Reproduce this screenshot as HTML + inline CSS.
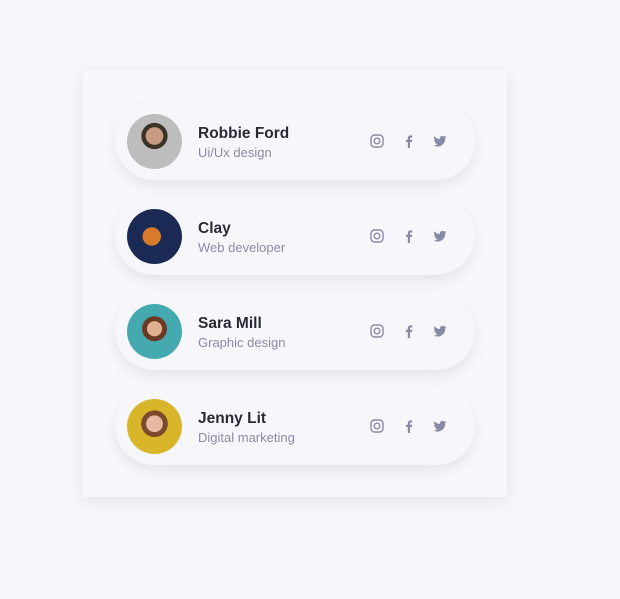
<!DOCTYPE html>
<html><head><style>
body{margin:0;width:620px;height:599px;background:#f7f7fb;font-family:"Liberation Sans",sans-serif;position:relative;overflow:hidden}
.box{position:absolute;left:83px;top:70px;width:424px;height:427px;background:#f8f8fc;box-shadow:0 4px 14px rgba(0,0,0,.08)}
.pill{position:absolute;left:32px;width:360px;height:78px;border-radius:39px;background:#f7f7fb;box-shadow:0 6px 14px rgba(0,0,0,.08)}
.av{position:absolute;left:12px;top:12px;width:55px;height:55px;border-radius:50%}
.n{position:absolute;left:83px;top:23px;font-size:15.5px;font-weight:bold;color:#2a2a36}
.s{position:absolute;left:83px;top:43px;font-size:13px;color:#8a8aa8}
.ic{position:absolute;top:32px;width:14px;height:14px}
</style></head><body>
<div class="box">
<div class="pill" style="top:32px"><div class="av" style="background:radial-gradient(circle at 50% 40%,#c69b80 0 20%,#3a3328 21% 30%,#bdbdbd 31%)"></div><div class="n">Robbie Ford</div><div class="s">Ui/Ux design</div>
<svg class="ic" style="left:255px" viewBox="0 0 14 14" fill="none" stroke="#8a8aa8" stroke-width="1.4"><rect x="1" y="1" width="12" height="12" rx="3.5"/><circle cx="7" cy="7" r="2.8"/></svg>
<svg class="ic" style="left:287px" viewBox="0 0 14 14"><path d="M8 14V8h2l.3-2.2H8V4.5c0-.6.2-1 1-1h1.3V1.5C10 1.5 9.4 1.4 8.6 1.4 6.9 1.4 5.8 2.4 5.8 4.3v1.5H4V8h1.8v6z" fill="#8a8aa8"/></svg>
<svg class="ic" style="left:318px" viewBox="0 0 14 14"><path d="M13.5 3.1c-.5.2-1 .4-1.5.4.6-.3 1-.9 1.2-1.5-.5.3-1.1.5-1.7.7a2.7 2.7 0 0 0-4.6 2.4C4.7 5 2.7 3.9 1.4 2.3c-.8 1.3-.3 2.8.8 3.6-.4 0-.9-.1-1.2-.3 0 1.3.9 2.4 2.2 2.7-.4.1-.8.1-1.2 0 .3 1.1 1.4 1.9 2.5 1.9A5.4 5.4 0 0 1 .5 11.3 7.6 7.6 0 0 0 12.2 4.5v-.3c.5-.4 1-.8 1.3-1.1z" fill="#8a8aa8"/></svg>
</div>
<div class="pill" style="top:127px"><div class="av" style="background:radial-gradient(circle at 45% 50%,#d97a2a 0 22%,#1a2a55 23%)"></div><div class="n">Clay</div><div class="s">Web developer</div>
<svg class="ic" style="left:255px" viewBox="0 0 14 14" fill="none" stroke="#8a8aa8" stroke-width="1.4"><rect x="1" y="1" width="12" height="12" rx="3.5"/><circle cx="7" cy="7" r="2.8"/></svg>
<svg class="ic" style="left:287px" viewBox="0 0 14 14"><path d="M8 14V8h2l.3-2.2H8V4.5c0-.6.2-1 1-1h1.3V1.5C10 1.5 9.4 1.4 8.6 1.4 6.9 1.4 5.8 2.4 5.8 4.3v1.5H4V8h1.8v6z" fill="#8a8aa8"/></svg>
<svg class="ic" style="left:318px" viewBox="0 0 14 14"><path d="M13.5 3.1c-.5.2-1 .4-1.5.4.6-.3 1-.9 1.2-1.5-.5.3-1.1.5-1.7.7a2.7 2.7 0 0 0-4.6 2.4C4.7 5 2.7 3.9 1.4 2.3c-.8 1.3-.3 2.8.8 3.6-.4 0-.9-.1-1.2-.3 0 1.3.9 2.4 2.2 2.7-.4.1-.8.1-1.2 0 .3 1.1 1.4 1.9 2.5 1.9A5.4 5.4 0 0 1 .5 11.3 7.6 7.6 0 0 0 12.2 4.5v-.3c.5-.4 1-.8 1.3-1.1z" fill="#8a8aa8"/></svg>
</div>
<div class="pill" style="top:222px"><div class="av" style="background:radial-gradient(circle at 50% 45%,#e0b090 0 18%,#6a3a25 19% 30%,#45a9b0 31%)"></div><div class="n">Sara Mill</div><div class="s">Graphic design</div>
<svg class="ic" style="left:255px" viewBox="0 0 14 14" fill="none" stroke="#8a8aa8" stroke-width="1.4"><rect x="1" y="1" width="12" height="12" rx="3.5"/><circle cx="7" cy="7" r="2.8"/></svg>
<svg class="ic" style="left:287px" viewBox="0 0 14 14"><path d="M8 14V8h2l.3-2.2H8V4.5c0-.6.2-1 1-1h1.3V1.5C10 1.5 9.4 1.4 8.6 1.4 6.9 1.4 5.8 2.4 5.8 4.3v1.5H4V8h1.8v6z" fill="#8a8aa8"/></svg>
<svg class="ic" style="left:318px" viewBox="0 0 14 14"><path d="M13.5 3.1c-.5.2-1 .4-1.5.4.6-.3 1-.9 1.2-1.5-.5.3-1.1.5-1.7.7a2.7 2.7 0 0 0-4.6 2.4C4.7 5 2.7 3.9 1.4 2.3c-.8 1.3-.3 2.8.8 3.6-.4 0-.9-.1-1.2-.3 0 1.3.9 2.4 2.2 2.7-.4.1-.8.1-1.2 0 .3 1.1 1.4 1.9 2.5 1.9A5.4 5.4 0 0 1 .5 11.3 7.6 7.6 0 0 0 12.2 4.5v-.3c.5-.4 1-.8 1.3-1.1z" fill="#8a8aa8"/></svg>
</div>
<div class="pill" style="top:317px"><div class="av" style="background:radial-gradient(circle at 50% 45%,#e8b8a0 0 20%,#7a4a2a 21% 32%,#d9b52a 33%)"></div><div class="n">Jenny Lit</div><div class="s">Digital marketing</div>
<svg class="ic" style="left:255px" viewBox="0 0 14 14" fill="none" stroke="#8a8aa8" stroke-width="1.4"><rect x="1" y="1" width="12" height="12" rx="3.5"/><circle cx="7" cy="7" r="2.8"/></svg>
<svg class="ic" style="left:287px" viewBox="0 0 14 14"><path d="M8 14V8h2l.3-2.2H8V4.5c0-.6.2-1 1-1h1.3V1.5C10 1.5 9.4 1.4 8.6 1.4 6.9 1.4 5.8 2.4 5.8 4.3v1.5H4V8h1.8v6z" fill="#8a8aa8"/></svg>
<svg class="ic" style="left:318px" viewBox="0 0 14 14"><path d="M13.5 3.1c-.5.2-1 .4-1.5.4.6-.3 1-.9 1.2-1.5-.5.3-1.1.5-1.7.7a2.7 2.7 0 0 0-4.6 2.4C4.7 5 2.7 3.9 1.4 2.3c-.8 1.3-.3 2.8.8 3.6-.4 0-.9-.1-1.2-.3 0 1.3.9 2.4 2.2 2.7-.4.1-.8.1-1.2 0 .3 1.1 1.4 1.9 2.5 1.9A5.4 5.4 0 0 1 .5 11.3 7.6 7.6 0 0 0 12.2 4.5v-.3c.5-.4 1-.8 1.3-1.1z" fill="#8a8aa8"/></svg>
</div>
</div>
</body></html>
